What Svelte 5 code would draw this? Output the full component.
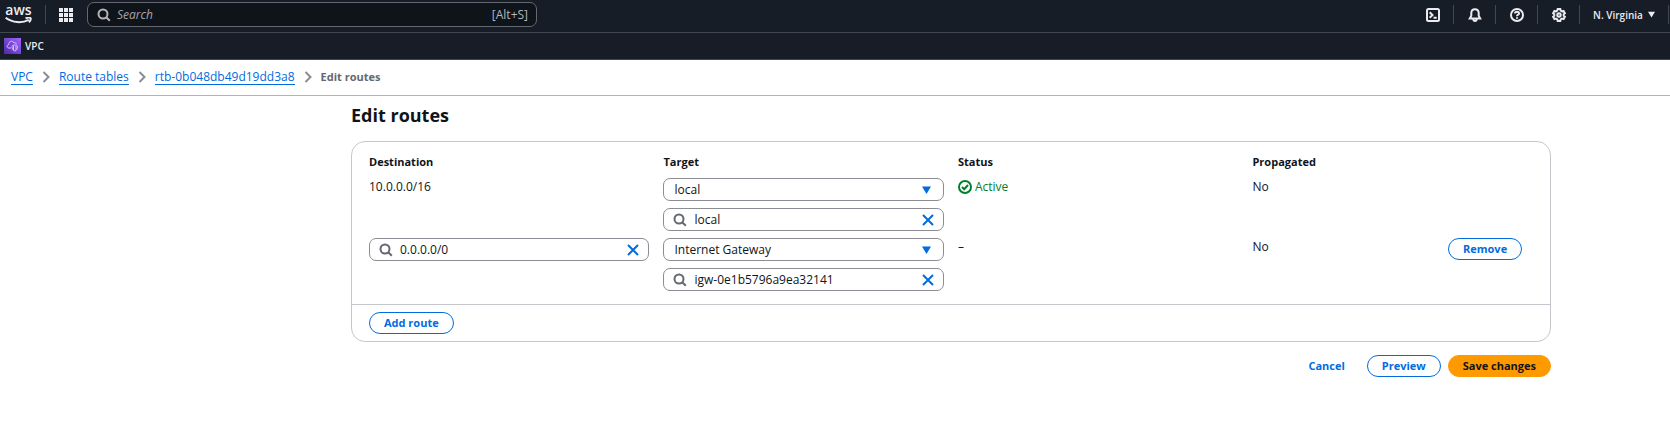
<script>
  let routes = $state([
    { fixed: true, destination: '10.0.0.0/16', kind: 'local', target: 'local', status: 'Active', propagated: 'No' },
    { fixed: false, destination: '0.0.0.0/0', kind: 'Internet Gateway', target: 'igw-0e1b5796a9ea32141', status: '–', propagated: 'No' }
  ]);
  const kinds = ['local', 'Internet Gateway'];

  function addRoute() {
    routes.push({ fixed: false, destination: '', kind: 'Internet Gateway', target: '', status: '–', propagated: 'No' });
  }
</script>

{#snippet magnifier()}
  <svg class="lens" viewBox="0 0 14 14" aria-hidden="true"><circle cx="6" cy="6" r="4.500" /><path d="m9.200 9.200 3.600 3.600" /></svg>
{/snippet}

{#snippet chevron()}
  <svg class="chevron" viewBox="0 0 8 12" aria-hidden="true"><path d="m1.500 1 5 5-5 5" /></svg>
{/snippet}

{#snippet clear(action)}
  <button class="clear" type="button" aria-label="Clear" onclick={action}>
    <svg viewBox="0 0 12 12" aria-hidden="true"><path d="m1 1 10 10M11 1 1 11" /></svg>
  </button>
{/snippet}

<header>
  <div class="topbar">
    <a class="logo" href="#home">
      <span>aws</span>
      <svg viewBox="0 0 27 7" aria-hidden="true">
        <path d="M.6.800c7 5.200 16.500 5.600 23.200 2" />
        <path d="M20.500 1.400c2-.8 4.300-.9 5-.3.500.7-.1 2.600-1.500 4.200" />
      </svg>
    </a>
    <button class="apps" type="button" aria-label="Services">
      <svg viewBox="0 0 14 14" aria-hidden="true">
        {#each [0, 5, 10] as y}{#each [0, 5, 10] as x}<rect {x} {y} width="4" height="4" />{/each}{/each}
      </svg>
    </button>
    <label class="search">
      {@render magnifier()}
      <input type="search" placeholder="Search" aria-label="Search" />
      <span>[Alt+S]</span>
    </label>
    <nav class="tools" aria-label="Tools">
      <button type="button" aria-label="CloudShell">
        <svg viewBox="0 0 16 16"><rect x="2" y="2" width="12" height="12" rx="1.500" /><path d="m4.700 5.200 2.800 2.800-2.800 2.800M8.500 10.800h3.200" /></svg>
      </button>
      <button type="button" aria-label="Notifications">
        <svg viewBox="0 0 16 16"><path d="M8 2.200C5.700 2.200 4.300 3.800 4.300 6v2.700L2.800 11.500h10.400L11.700 8.700V6c0-2.200-1.400-3.800-3.700-3.800ZM6.200 12c.1 1.200.9 2 1.800 2s1.700-.8 1.800-2" /></svg>
      </button>
      <button type="button" aria-label="Help">
        <svg viewBox="0 0 16 16"><circle cx="8" cy="8" r="6" /><path d="M6 6.600c0-1.200.9-1.900 2-1.900s2 .7 2 1.700c0 1.400-2 1.400-2 2.800M8 10.200v1.500" /></svg>
      </button>
      <button type="button" aria-label="Settings">
        <svg viewBox="0 0 16 16"><path d="m6.700 2-.4 1.600-1.300.8-1.600-.5-1.300 2.300 1.200 1.100v1.400L2.100 9.800l1.300 2.300 1.600-.5 1.300.8.4 1.600h2.600l.4-1.600 1.300-.8 1.600.5 1.300-2.300-1.200-1.100V7.300l1.200-1.100-1.300-2.300-1.600.5-1.300-.8L9.300 2Z" /><circle cx="8" cy="8" r="1.700" /></svg>
      </button>
      <button class="region" type="button">
        N. Virginia
        <svg class="down" viewBox="0 0 9 8" aria-hidden="true"><path d="M0 .5h9L4.500 8Z" /></svg>
      </button>
    </nav>
  </div>
  <div class="favorites">
    <a href="#vpc">
      <svg viewBox="0 0 17 16" aria-hidden="true">
        <defs><linearGradient id="violet" x1="0" y1="1" x2="1" y2="0"><stop offset="0" stop-color="#4d27a8" /><stop offset="1" stop-color="#a166ff" /></linearGradient></defs>
        <rect width="17" height="16" fill="url(#violet)" stroke="none" />
        <g stroke="#dccbfa" stroke-width=".9">
          <path d="M7 10H5C2.600 10 2.600 6.900 4.700 6.700 4.500 3 9 2 10 5c1.300-.7 2.300 0 2.400 1.200" />
          <path d="M8 8.500c0-2 5.500-2 5.500 0 0 2-.8 4.300-2.700 4.500C8.800 12.800 8 10.500 8 8.500ZM9.500 7.700v4.300M12 7.700v4.300" />
        </g>
      </svg>
      VPC
    </a>
  </div>
</header>

<nav class="breadcrumbs" aria-label="Breadcrumbs">
  <a href="#vpc">VPC</a>{@render chevron()}
  <a href="#route-tables">Route tables</a>{@render chevron()}
  <a href="#route-table">rtb-0b048db49d19dd3a8</a>{@render chevron()}
  <span aria-current="page">Edit routes</span>
</nav>

<main>
  <div class="content">
    <h1>Edit routes</h1>
    <section class="panel">
      <table>
        <thead>
          <tr>
            <th class="wide">Destination</th>
            <th class="wide">Target</th>
            <th class="wide">Status</th>
            <th class="narrow">Propagated</th>
            <td></td>
          </tr>
        </thead>
        <tbody>
          {#each routes as route, i}
            <tr>
              <td>
                {#if route.fixed}
                  {route.destination}
                {:else}
                  <div class="field">
                    {@render magnifier()}
                    <input type="text" aria-label="Destination" bind:value={route.destination} />
                    {@render clear(() => (route.destination = ''))}
                  </div>
                {/if}
              </td>
              <td>
                <div class="stack">
                  <div class="field pick">
                    <select aria-label="Target type" bind:value={route.kind}>
                      {#each kinds as kind}<option>{kind}</option>{/each}
                    </select>
                    <svg class="down" viewBox="0 0 9 8" aria-hidden="true"><path d="M0 .5h9L4.500 8Z" /></svg>
                  </div>
                  <div class="field">
                    {@render magnifier()}
                    <input type="text" aria-label="Target" bind:value={route.target} />
                    {@render clear(() => (route.target = ''))}
                  </div>
                </div>
              </td>
              <td>
                {#if route.status === 'Active'}
                  <span class="active">
                    <svg viewBox="0 0 14 14" aria-hidden="true"><circle cx="7" cy="7" r="6" /><path d="m4 7 2.200 2.200L10 5" /></svg>
                    Active
                  </span>
                {:else}
                  {route.status}
                {/if}
              </td>
              <td>{route.propagated}</td>
              <td>
                {#if !route.fixed}
                  <button class="btn" type="button" onclick={() => routes.splice(i, 1)}>Remove</button>
                {/if}
              </td>
            </tr>
          {/each}
        </tbody>
      </table>
      <div class="panel-footer">
        <button class="btn" type="button" onclick={addRoute}>Add route</button>
      </div>
    </section>
    <div class="actions">
      <button class="btn link" type="button">Cancel</button>
      <button class="btn" type="button">Preview</button>
      <button class="btn primary" type="button">Save changes</button>
    </div>
  </div>
</main>

<style>
  :global(body) {
    background: #fff;
    color: #0f141a;
    font: 12px/18px "Open Sans", "Noto Sans", sans-serif;
  }
  button, input, select { font: inherit; color: inherit; }
  button { cursor: pointer; padding: 0; border: 0; background: none; }
  svg { display: block; flex: none; fill: none; stroke: currentColor; }
  a { color: inherit; text-decoration: none; }
  input, select { min-width: 0; padding: 0; border: 0; outline: 0; background: none; appearance: none; }
  .lens { width: 14px; height: 14px; stroke-width: 2; }
  .down { width: 9px; height: 8px; fill: currentColor; stroke: none; }

  header { background: #161d26; color: #ebebf0; }
  .topbar { display: flex; align-items: center; height: 29px; padding-bottom: 3px; border-bottom: 1px solid #424650; }
  .logo { display: flex; flex-direction: column; align-items: center; padding: 0 13px 0 5px; border-right: 1px solid #424650; height: 19px; }
  .logo span { font-size: 14px; line-height: 10px; font-weight: 600; }
  .logo svg { width: 27px; height: 7px; margin-top: 2px; stroke-width: 2; }
  .apps { padding: 0 14px 0 13px; }
  .apps svg { width: 14px; height: 14px; fill: currentColor; stroke: none; }
  .search { display: flex; align-items: center; gap: 6px; width: 450px; height: 25px; box-sizing: border-box; padding: 0 8px 0 9px; border: 1px solid #656871; border-radius: 7px; background: #0f141a; color: #b4b4bb; }
  .search input { flex: 1; }
  .search input::placeholder { color: #a4a4ad; font-style: italic; opacity: 1; }
  .tools { display: flex; align-items: center; margin-left: auto; margin-right: 1px; }
  .tools button { display: flex; align-items: center; justify-content: center; width: 42px; height: 19px; box-sizing: border-box; border-right: 1px solid #424650; }
  .tools button svg { width: 16px; height: 16px; stroke-width: 2; }
  .tools .region { width: 89px; gap: 5px; font-size: 10px; font-weight: 600; }
  .tools .region svg { width: 7px; height: 7px; }
  .favorites { display: flex; align-items: center; height: 26px; padding: 0 4px; border-bottom: 1px solid #424650; }
  .favorites a { display: flex; align-items: center; gap: 4px; font-size: 10px; font-weight: 600; }
  .favorites svg { width: 17px; height: 16px; }

  .breadcrumbs { display: flex; align-items: center; gap: 9px; height: 34px; padding: 0 11px 1px; border-bottom: 1px solid #b4b4bb; color: #656871; font-size: 11px; font-weight: 700; }
  .breadcrumbs a { color: #006ce0; font-size: 12px; font-weight: 400; line-height: 15px; border-bottom: 1px solid #006ce0; }
  .chevron { width: 8px; height: 12px; stroke: #8c8c94; stroke-width: 2; }

  main { padding: 6px 0 40px 232px; }
  .content { max-width: 1200px; margin: 0 auto; }
  h1 { margin: 0 0 12px; font-size: 18px; line-height: 27px; font-weight: 700; }
  .panel { border: 1px solid #c6c6cd; border-radius: 14px; }
  .panel table { margin: 11px 17px 6px; width: calc(100% - 34px); }
  table { table-layout: fixed; border-collapse: collapse; }
  th, td { box-sizing: border-box; padding: 0 14px 7px 0; text-align: left; vertical-align: top; }
  th { font-size: 11px; font-weight: 700; }
  .wide { width: 25.3%; }
  .narrow { width: 16.8%; }
  .stack { display: flex; flex-direction: column; gap: 7px; }
  .field { display: flex; align-items: center; gap: 7px; height: 23px; box-sizing: border-box; padding: 0 9px; border: 1px solid #8c8c94; border-radius: 7px; }
  .field .lens { color: #656871; }
  .field input { flex: 1; }
  .pick { padding: 0 12px 0 10px; }
  .pick select { flex: 1; }
  .pick .down { color: #006ce0; }
  .clear { color: #006ce0; }
  .clear svg { width: 12px; height: 12px; stroke-width: 2; }
  .active { display: flex; align-items: center; gap: 3px; color: #00802f; }
  .active svg { width: 14px; height: 14px; stroke-width: 2; }
  .btn { height: 22px; padding: 0 14px; border: 1px solid #006ce0; border-radius: 11px; color: #006ce0; font-size: 11px; font-weight: 700; line-height: 18px; }
  .link { border-color: transparent; }
  .primary { border-color: #ff9900; background: #ff9900; color: #0f141a; }
  .panel-footer { display: flex; padding: 7px 17px; border-top: 1px solid #c6c6cd; }
  .actions { display: flex; justify-content: flex-end; gap: 7px; margin-top: 13px; }
</style>
